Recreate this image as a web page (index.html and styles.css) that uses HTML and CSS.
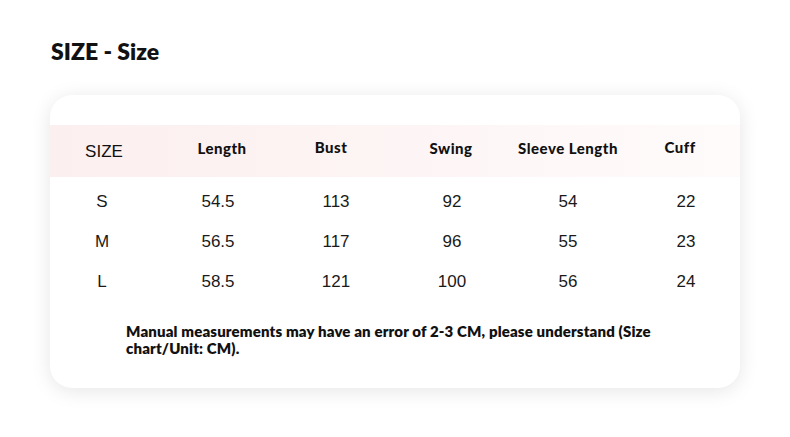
FILE: index.html
```html
<!DOCTYPE html>
<html>
<head>
<meta charset="utf-8">
<link rel="stylesheet" href="styles.css">
</head>
<body>
<h1 class="title">SIZE - Size</h1>
<div class="card">
  <div class="head-row">
    <div class="cell size-label">SIZE</div>
    <div class="cell">Length</div>
    <div class="cell up">Bust</div>
    <div class="cell">Swing</div>
    <div class="cell">Sleeve Length</div>
    <div class="cell up">Cuff</div>
  </div>
  <div class="rows">
    <div class="row"><div class="cell">S</div><div class="cell">54.5</div><div class="cell">113</div><div class="cell">92</div><div class="cell">54</div><div class="cell">22</div></div>
    <div class="row"><div class="cell">M</div><div class="cell">56.5</div><div class="cell">117</div><div class="cell">96</div><div class="cell">55</div><div class="cell">23</div></div>
    <div class="row"><div class="cell">L</div><div class="cell">58.5</div><div class="cell">121</div><div class="cell">100</div><div class="cell">56</div><div class="cell">24</div></div>
  </div>
  <p class="note">Manual measurements may have an error of 2-3 CM, please understand (Size chart/Unit: CM).</p>
</div>
</body>
</html>
```

FILE: styles.css
```css
html, body {
  margin: 0;
  padding: 0;
  background: #ffffff;
}
body {
  width: 790px;
  height: 437px;
  overflow: hidden;
  color: #111;
}
.title {
  margin: 0;
  padding: 38px 0 0 51px;
  font-family: "Lato", "Open Sans", sans-serif;
  font-weight: 800;
  font-size: 23px;
  line-height: 27px;
  color: #111;
}
.card {
  margin: 30px 0 0 50px;
  width: 690px;
  height: 293px;
  box-sizing: border-box;
  padding-top: 30px;
  background: #fff;
  border-radius: 22px;
  box-shadow: 0 3px 20px rgba(0, 0, 0, 0.1);
  overflow: hidden;
}
.head-row {
  display: grid;
  grid-template-columns: 108px 128px 90px 150px 84px 140px;
  height: 52px;
  align-items: center;
  background: linear-gradient(to right, #fcefef 0%, #fdf4f4 45%, #fffbfb 100%);
  font-family: "Lato", "Open Sans", sans-serif;
  font-weight: 900;
  font-size: 15px;
  letter-spacing: 0.5px;
  color: #111;
}
.cell {
  display: flex;
  justify-content: center;
  white-space: nowrap;
}
.head-row .cell {
  margin-top: -6px;
}
.head-row .cell.up {
  margin-top: -8px;
}
.head-row .size-label {
  font-family: "Liberation Sans", Arial, sans-serif;
  font-weight: 400;
  font-size: 17px;
  letter-spacing: 0;
  margin-top: 2px;
}
.rows {
  padding-top: 5px;
}
.row {
  display: grid;
  grid-template-columns: 104px 128px 108px 124px 108px 128px;
  height: 40px;
  align-items: center;
  font-family: "Liberation Sans", Arial, sans-serif;
  font-size: 17px;
  color: #1a1a1a;
}
.note {
  margin: 21px 0 0 76px;
  width: 560px;
  font-family: "Lato", "Open Sans", sans-serif;
  font-weight: 800;
  font-size: 15px;
  letter-spacing: 0.15px;
  line-height: 17px;
  color: #111;
}
```
